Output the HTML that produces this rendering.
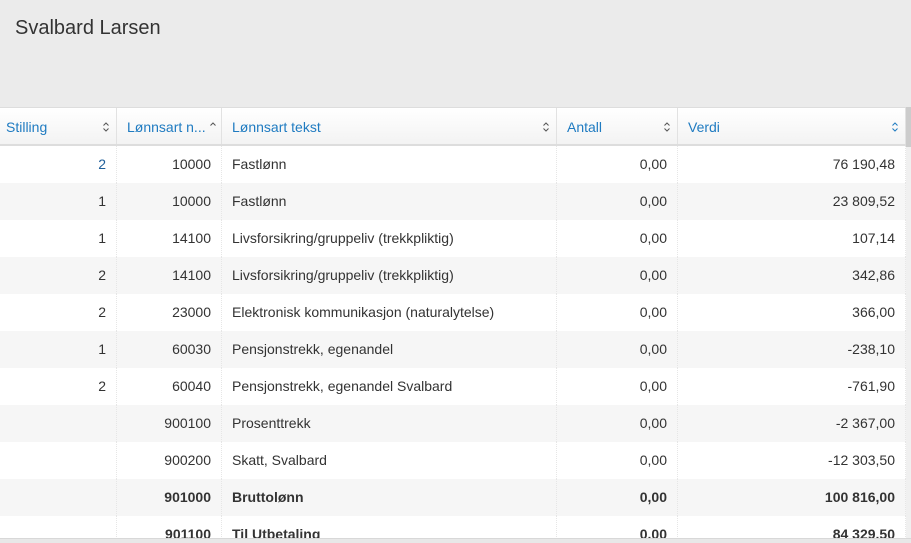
<!DOCTYPE html>
<html><head><meta charset="utf-8"><style>
*{margin:0;padding:0;box-sizing:border-box}
body{width:911px;height:543px;overflow:hidden;background:#ebebeb;font-family:"Liberation Sans",sans-serif;font-size:14px;color:#333;position:relative}
.title{position:absolute;left:15px;top:17px;font-size:20px;color:#333}
.grid{position:absolute;left:0;top:107px;width:906px;height:431px;background:#fff;overflow:hidden}
.hdr{height:39px;display:flex;background:linear-gradient(#fff,#f3f3f3);border-top:1px solid #ddd;border-bottom:2px solid #ddd}
.hdr div{border-right:1px solid #e2e2e2;color:#1f7bc1;padding:0 10px;line-height:38px;position:relative;font-size:14px}
.hdr div.c1{padding-left:6px}
.hdr div svg{position:absolute;right:6px;top:13px}
.row{height:37px;display:flex;line-height:37px}
.row div{border-right:1px dotted #e6e6e6;padding:0 10px;white-space:nowrap;overflow:hidden}
.c1{width:117px;text-align:right}.c2{width:105px;text-align:right}.c3{width:335px}.c4{width:121px;text-align:right}.c5{width:228px;text-align:right}
.hdr .c1,.hdr .c2,.hdr .c4,.hdr .c5{text-align:left}
.b{font-weight:bold}
.sb{position:absolute;left:906px;top:107px;width:5px;height:431px;background:#f0f0f0}
.sb2{position:absolute;left:906px;top:107px;width:5px;height:40px;background:#ccc}
.hs{position:absolute;left:0;top:538px;width:911px;height:5px;background:#e8e8e8;border-top:1px solid #d8d8d8}
</style></head><body>
<div class="title">Svalbard Larsen</div>
<div class="grid">
<div class="hdr">
<div class="c1">Stilling<svg width="8" height="12" viewBox="0 0 8 12"><path d="M1.5 4.5L4 2L6.5 4.5M1.5 7.5L4 10L6.5 7.5" fill="none" stroke="#555" stroke-width="1"/></svg></div>
<div class="c2">Lønnsart n...<svg width="8" height="12" viewBox="0 0 8 12" style="right:4px"><path d="M1.5 4.5L4 2L6.5 4.5" fill="none" stroke="#555" stroke-width="1"/></svg></div>
<div class="c3">Lønnsart tekst<svg width="8" height="12" viewBox="0 0 8 12"><path d="M1.5 4.5L4 2L6.5 4.5M1.5 7.5L4 10L6.5 7.5" fill="none" stroke="#555" stroke-width="1"/></svg></div>
<div class="c4">Antall<svg width="8" height="12" viewBox="0 0 8 12"><path d="M1.5 4.5L4 2L6.5 4.5M1.5 7.5L4 10L6.5 7.5" fill="none" stroke="#555" stroke-width="1"/></svg></div>
<div class="c5">Verdi<svg width="8" height="12" viewBox="0 0 8 12"><path d="M1.5 4.5L4 2L6.5 4.5M1.5 7.5L4 10L6.5 7.5" fill="none" stroke="#1f7bc1" stroke-width="1"/></svg></div>
</div>
<div>
<div class="row" style="background:#fff"><div class="c1" style="color:#1f5f9a">2</div><div class="c2">10000</div><div class="c3">Fastlønn</div><div class="c4">0,00</div><div class="c5">76 190,48</div></div>
<div class="row" style="background:#f6f6f6"><div class="c1">1</div><div class="c2">10000</div><div class="c3">Fastlønn</div><div class="c4">0,00</div><div class="c5">23 809,52</div></div>
<div class="row" style="background:#fff"><div class="c1">1</div><div class="c2">14100</div><div class="c3">Livsforsikring/gruppeliv (trekkpliktig)</div><div class="c4">0,00</div><div class="c5">107,14</div></div>
<div class="row" style="background:#f6f6f6"><div class="c1">2</div><div class="c2">14100</div><div class="c3">Livsforsikring/gruppeliv (trekkpliktig)</div><div class="c4">0,00</div><div class="c5">342,86</div></div>
<div class="row" style="background:#fff"><div class="c1">2</div><div class="c2">23000</div><div class="c3">Elektronisk kommunikasjon (naturalytelse)</div><div class="c4">0,00</div><div class="c5">366,00</div></div>
<div class="row" style="background:#f6f6f6"><div class="c1">1</div><div class="c2">60030</div><div class="c3">Pensjonstrekk, egenandel</div><div class="c4">0,00</div><div class="c5">-238,10</div></div>
<div class="row" style="background:#fff"><div class="c1">2</div><div class="c2">60040</div><div class="c3">Pensjonstrekk, egenandel Svalbard</div><div class="c4">0,00</div><div class="c5">-761,90</div></div>
<div class="row" style="background:#f6f6f6"><div class="c1"></div><div class="c2">900100</div><div class="c3">Prosenttrekk</div><div class="c4">0,00</div><div class="c5">-2 367,00</div></div>
<div class="row" style="background:#fff"><div class="c1"></div><div class="c2">900200</div><div class="c3">Skatt, Svalbard</div><div class="c4">0,00</div><div class="c5">-12 303,50</div></div>
<div class="row b" style="background:#f6f6f6"><div class="c1"></div><div class="c2">901000</div><div class="c3">Bruttolønn</div><div class="c4">0,00</div><div class="c5">100 816,00</div></div>
<div class="row b" style="background:#fff"><div class="c1"></div><div class="c2">901100</div><div class="c3">Til Utbetaling</div><div class="c4">0,00</div><div class="c5">84 329,50</div></div>
</div>
</div>
<div class="sb"></div><div class="sb2"></div>
<div class="hs"></div>
</body></html>
